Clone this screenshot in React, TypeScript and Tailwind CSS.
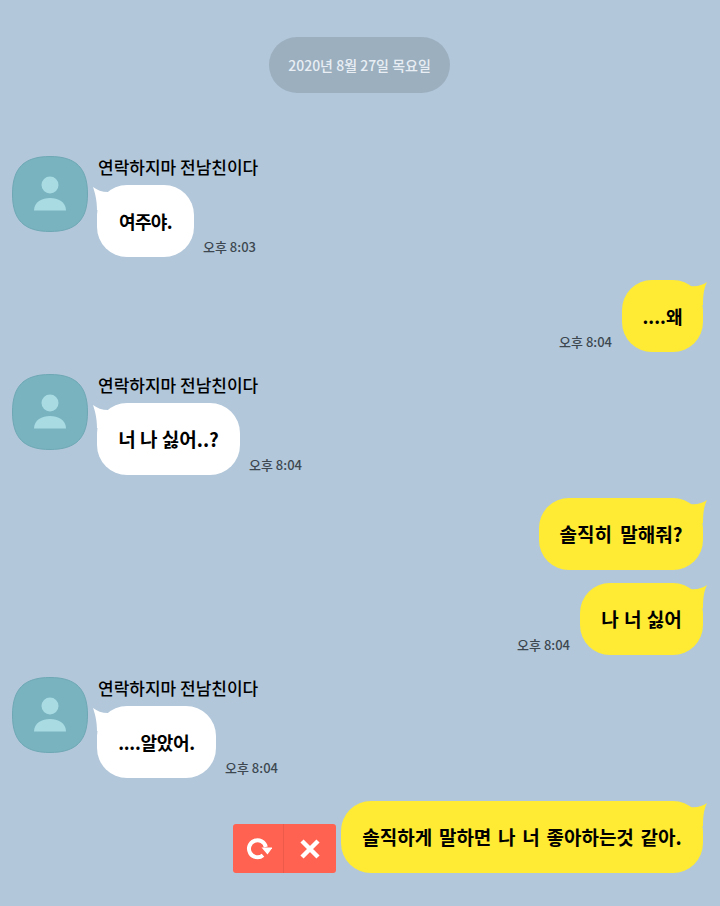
const font = "font-['Noto_Sans_CJK_KR','Noto_Sans',sans-serif]";

function Avatar() {
  return (
    <svg width="76" height="76" viewBox="0 0 76 76" className="shrink-0">
      <path d="M38 0.5C64 0.5 75.500 12 75.500 38C75.500 64 64 75.500 38 75.500C12 75.500 0.500 64 0.500 38C0.500 12 12 0.500 38 0.500Z" fill="#78b3bf" stroke="#6fa8b5" strokeWidth="1" />
      <circle cx="38" cy="29" r="8.500" fill="#a9dbe3" />
      <path d="M22 54.500C22 46 30 42 38 42C46 42 54 46 54 54.500Z" fill="#a9dbe3" />
    </svg>
  );
}

function Time({ children }: { children: string }) {
  return <span className="text-[13px] leading-[16px] text-[#3d4750] font-medium whitespace-nowrap mb-[2px]">{children}</span>;
}

function LeftTail() {
  return (
    <svg className="absolute left-[-5px] top-[1px]" width="24" height="24" viewBox="0 0 24 24">
      <path d="M1 1C5 4 10 6 16 6L16 24L5 24C5 14 3 7 1 1Z" fill="#ffffff" />
    </svg>
  );
}

function RightTail() {
  return (
    <svg className="absolute right-[-5px] top-[1px]" width="24" height="24" viewBox="0 0 24 24">
      <path d="M23 1C19 4 13 6 5 5L5 24L19 24C19 14 20 7 23 1Z" fill="#ffeb33" />
    </svg>
  );
}

const bubble = "relative h-[72px] rounded-[30px] flex items-center justify-center font-bold text-black whitespace-nowrap";

function Incoming({ text, time, className, bubbleClass }: { text: string; time: string; className: string; bubbleClass: string }) {
  return (
    <div className={`flex items-start pl-3 ${className}`}>
      <Avatar />
      <div className="ml-[9px] flex flex-col">
        <div className="h-[29px] text-[17px] leading-[22px] font-medium text-black whitespace-nowrap ml-[1px]">연락하지마 전남친이다</div>
        <div className="flex items-end gap-[9px]">
          <div className={`${bubble} bg-white ${bubbleClass}`}>
            <LeftTail />
            <span className="relative">{text}</span>
          </div>
          <Time>{time}</Time>
        </div>
      </div>
    </div>
  );
}

function Outgoing({ text, time, className, bubbleClass }: { text: string; time?: string; className: string; bubbleClass: string }) {
  return (
    <div className={`flex items-end justify-end pr-[17px] gap-[10px] ${className}`}>
      {time && <Time>{time}</Time>}
      <div className={`${bubble} bg-[#ffeb33] ${bubbleClass}`}>
        <RightTail />
        <span className="relative">{text}</span>
      </div>
    </div>
  );
}

export default function App() {
  return (
    <div className={`w-[720px] h-[906px] overflow-hidden bg-[#b2c7da] pt-[37px] ${font}`}>
      <div className="flex justify-center pr-[1px]">
        <div className="h-[56px] w-[181px] rounded-full bg-[#9bafbf] flex items-center justify-center text-[14px] font-medium text-[#e8eef4] whitespace-nowrap">2020년 8월 27일 목요일</div>
      </div>
      <Incoming className="mt-[63px]" bubbleClass="w-[97px] text-[18px] tracking-[-0.600px]" text="여주야." time="오후 8:03" />
      <Outgoing className="mt-[23px]" bubbleClass="w-[81px] text-[18px]" text="....왜" time="오후 8:04" />
      <Incoming className="mt-[22px]" bubbleClass="w-[143px] text-[19px]" text="너 나 싫어..?" time="오후 8:04" />
      <Outgoing className="mt-[23px]" bubbleClass="w-[164px] text-[19px] [word-spacing:4px]" text="솔직히 말해줘?" />
      <Outgoing className="mt-[13px]" bubbleClass="w-[123px] text-[19px] [word-spacing:1px]" text="나 너 싫어" time="오후 8:04" />
      <Incoming className="mt-[22px]" bubbleClass="w-[119px] text-[18px] tracking-[-0.300px]" text="....알았어." time="오후 8:04" />
      <div className="mt-[23px] flex items-end justify-end pr-[17px] gap-[5px]">
        <div className="flex h-[49px] w-[103px] rounded-[3px] bg-[#ff6250] overflow-hidden">
          <div className="w-[51px] flex items-center justify-center border-r border-[#ee5a49]">
            <svg width="28" height="28" viewBox="0 0 28 28" fill="none">
              <path d="M19 20.200A8.500 8.500 0 1 1 21.800 12" stroke="#fff" strokeWidth="4" />
              <path d="M17.500 12.500H28.500L23.500 19.500Z" fill="#fff" />
            </svg>
          </div>
          <div className="flex-1 flex items-center justify-center">
            <svg width="22" height="22" viewBox="0 0 22 22" fill="none">
              <path d="M3 3L19 19M19 3L3 19" stroke="#fff" strokeWidth="4.500" />
            </svg>
          </div>
        </div>
        <div className={`${bubble} bg-[#ffeb33] w-[362px] text-[19px] [word-spacing:2.400px]`}>
          <RightTail />
          <span className="relative">솔직하게 말하면 나 너 좋아하는것 같아.</span>
        </div>
      </div>
    </div>
  );
}
